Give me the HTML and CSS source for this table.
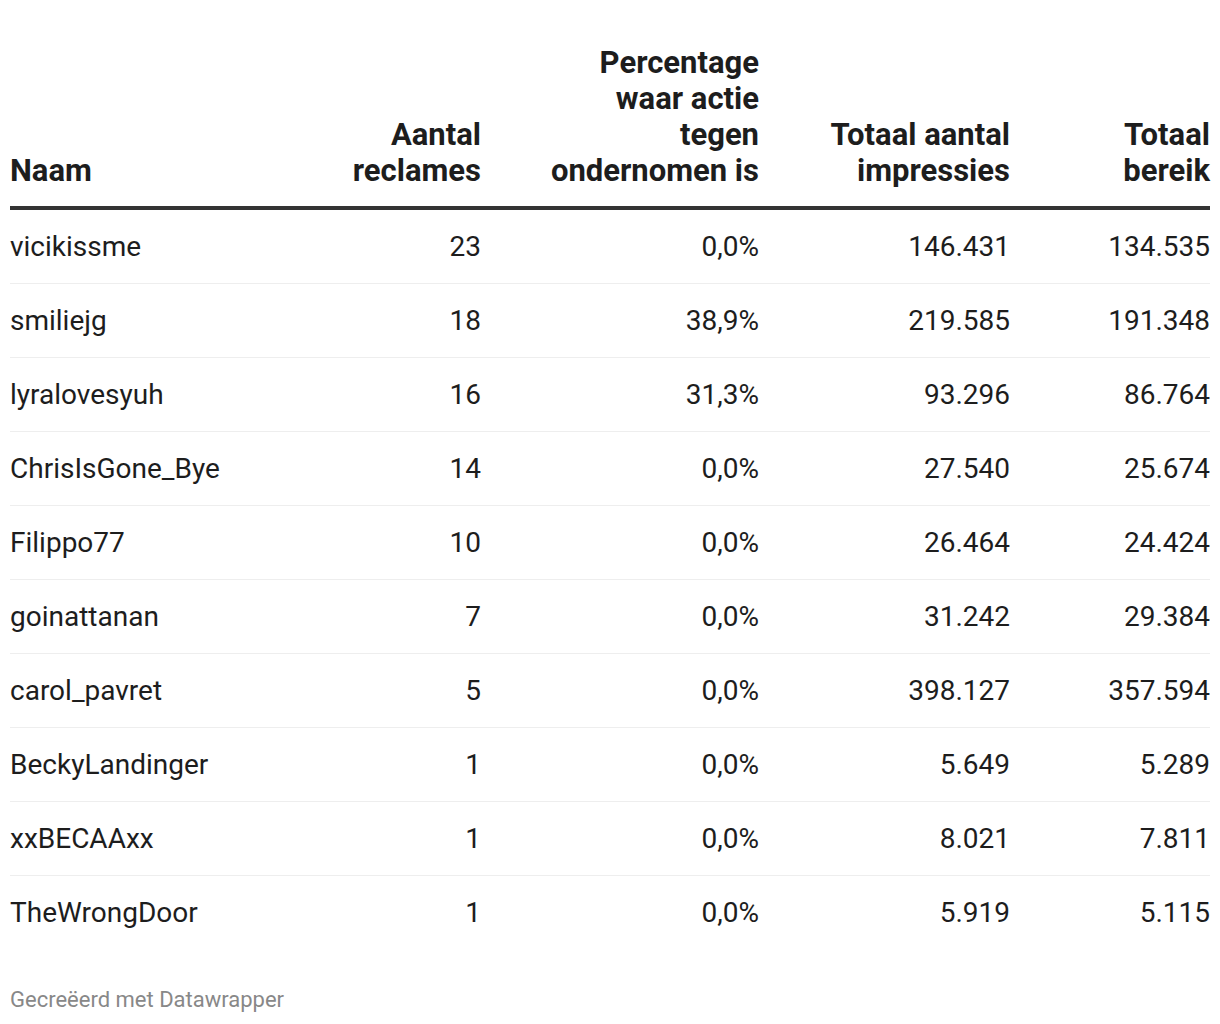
FILE: index.html
```html
<!DOCTYPE html>
<html lang="nl">
<head>
<meta charset="utf-8">
<title>Reclames</title>
<link rel="stylesheet" href="styles.css">
</head>
<body>
<div class="chart">
  <table class="dw-table">
    <thead>
      <tr>
        <th class="c-name">Naam</th>
        <th class="c-num c2">Aantal<br>reclames</th>
        <th class="c-num c3">Percentage<br>waar actie<br>tegen<br>ondernomen is</th>
        <th class="c-num c4">Totaal aantal<br>impressies</th>
        <th class="c-num c5">Totaal<br>bereik</th>
      </tr>
    </thead>
    <tbody>
      <tr><td class="c-name">vicikissme</td><td class="c-num">23</td><td class="c-num">0,0%</td><td class="c-num">146.431</td><td class="c-num">134.535</td></tr>
      <tr><td class="c-name">smiliejg</td><td class="c-num">18</td><td class="c-num">38,9%</td><td class="c-num">219.585</td><td class="c-num">191.348</td></tr>
      <tr><td class="c-name">lyralovesyuh</td><td class="c-num">16</td><td class="c-num">31,3%</td><td class="c-num">93.296</td><td class="c-num">86.764</td></tr>
      <tr><td class="c-name">ChrisIsGone_Bye</td><td class="c-num">14</td><td class="c-num">0,0%</td><td class="c-num">27.540</td><td class="c-num">25.674</td></tr>
      <tr><td class="c-name">Filippo77</td><td class="c-num">10</td><td class="c-num">0,0%</td><td class="c-num">26.464</td><td class="c-num">24.424</td></tr>
      <tr><td class="c-name">goinattanan</td><td class="c-num">7</td><td class="c-num">0,0%</td><td class="c-num">31.242</td><td class="c-num">29.384</td></tr>
      <tr><td class="c-name">carol_pavret</td><td class="c-num">5</td><td class="c-num">0,0%</td><td class="c-num">398.127</td><td class="c-num">357.594</td></tr>
      <tr><td class="c-name">BeckyLandinger</td><td class="c-num">1</td><td class="c-num">0,0%</td><td class="c-num">5.649</td><td class="c-num">5.289</td></tr>
      <tr><td class="c-name">xxBECAAxx</td><td class="c-num">1</td><td class="c-num">0,0%</td><td class="c-num">8.021</td><td class="c-num">7.811</td></tr>
      <tr><td class="c-name">TheWrongDoor</td><td class="c-num">1</td><td class="c-num">0,0%</td><td class="c-num">5.919</td><td class="c-num">5.115</td></tr>
    </tbody>
  </table>
  <div class="footer">Gecreëerd met Datawrapper</div>
</div>
</body>
</html>
```

FILE: styles.css
```css
html, body {
  margin: 0;
  padding: 0;
  background: #ffffff;
}

body {
  font-family: Roboto, "Liberation Sans", sans-serif;
  color: #1d1d1d;
}

.chart {
  padding: 45px 10px 0 10px;
}

.dw-table {
  width: 1200px;
  border-collapse: collapse;
  table-layout: fixed;
  font-size: 28px;
  line-height: 36px;
}

.dw-table th {
  font-size: 31px;
  font-weight: 700;
  vertical-align: bottom;
  padding: 0 0 17px 0;
  border-bottom: 4px solid #333333;
}

.dw-table td {
  padding: 0;
  height: 73px;
  vertical-align: middle;
  border-bottom: 1px solid #eeeeee;
}

.dw-table tbody tr:last-child td {
  border-bottom: none;
}

.c-name {
  text-align: left;
  width: 290px;
}

.c-num {
  text-align: right;
}

.c2 { width: 181px; }
.c3 { width: 278px; }
.c4 { width: 251px; }
.c5 { width: 200px; }

.footer {
  margin-top: 37px;
  font-size: 22px;
  line-height: 28px;
  color: #888888;
}
```
